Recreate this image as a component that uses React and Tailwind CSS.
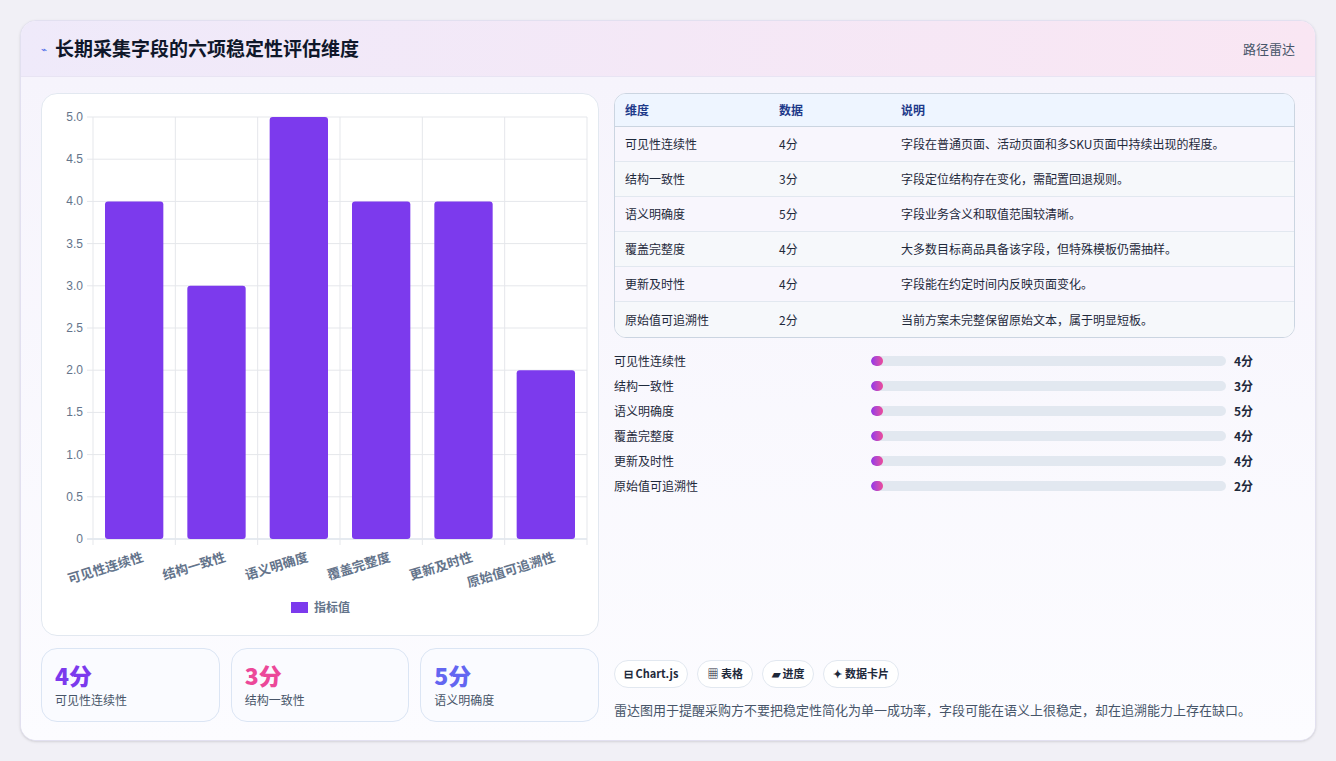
import React from "react";

const rows = [
  ["可见性连续性", 4, "字段在普通页面、活动页面和多SKU页面中持续出现的程度。"],
  ["结构一致性", 3, "字段定位结构存在变化，需配置回退规则。"],
  ["语义明确度", 5, "字段业务含义和取值范围较清晰。"],
  ["覆盖完整度", 4, "大多数目标商品具备该字段，但特殊模板仍需抽样。"],
  ["更新及时性", 4, "字段能在约定时间内反映页面变化。"],
  ["原始值可追溯性", 2, "当前方案未完整保留原始文本，属于明显短板。"],
];

function Chart() {
  const x0 = 51, x1 = 545, y0 = 23, y1 = 445;
  const cw = (x1 - x0) / 6;
  const yv = (v) => y1 - (v / 5) * (y1 - y0);
  const ticks = [0, 0.5, 1, 1.5, 2, 2.5, 3, 3.5, 4, 4.5, 5];
  return (
    <svg width="558" height="542" className="block" style={{ fontFamily: "'Liberation Sans','Noto Sans CJK SC',sans-serif" }}>
      {ticks.map((t) => (
        <g key={t}>
          <line x1={x0 - 6} x2={x1} y1={yv(t)} y2={yv(t)} stroke={t === 0 ? "#cbd5e1" : "#e5e7eb"} />
          <text x={x0 - 10} y={yv(t) + 4} textAnchor="end" fontSize="12" fill="#64748b">{t === 0 ? "0" : t.toFixed(1)}</text>
        </g>
      ))}
      {Array.from({ length: 7 }).map((_, i) => (
        <line key={i} x1={x0 + i * cw} x2={x0 + i * cw} y1={y0} y2={y1 + 6} stroke="#e5e7eb" />
      ))}
      {rows.map((r, i) => {
        const bx = x0 + i * cw + 12;
        return <rect key={i} x={bx} y={yv(r[1])} width={cw - 24} height={y1 - yv(r[1])} rx="3" fill="#7c3aed" />;
      })}
      {rows.map((r, i) => {
        const cx = x0 + i * cw + cw / 2 + 10;
        return (
          <text key={i} x={cx} y={y1 + 22} textAnchor="end" fontSize="13" fontWeight="bold" fill="#64748b" transform={`rotate(-17 ${cx} ${y1 + 22})`}>
            {r[0]}
          </text>
        );
      })}
      <rect x="249" y="508" width="17" height="11" fill="#7c3aed" />
      <text x="272" y="518" fontSize="12" fontWeight="bold" fill="#64748b">指标值</text>
    </svg>
  );
}

export default function App() {
  return (
    <div className="min-h-[761px] bg-[#f1f0f6] p-5" style={{ fontFamily: "'Noto Sans CJK SC','Liberation Sans',sans-serif" }}>
      <div className="rounded-2xl border border-[#e2e0f0] bg-white overflow-hidden shadow-sm">
        <div className="h-[56px] flex items-center justify-between px-5 bg-gradient-to-r from-[#efeafa] to-[#f9e6f3] border-b border-[#e8e4f3]">
          <div className="flex items-center gap-2">
            <span className="text-[10px] text-[#4f6ee8]">⌁</span>
            <span className="text-[19px] font-bold text-[#0f172a]">长期采集字段的六项稳定性评估维度</span>
          </div>
          <span className="text-[13px] text-[#475569]">路径雷达</span>
        </div>
        <div className="flex gap-[15px] px-5 pt-4 pb-[18px] bg-gradient-to-b from-[#f6f4fc] to-[#fcfcff]">
          <div className="w-[558px] flex flex-col gap-3">
            <div className="h-[543px] rounded-2xl border border-[#e2e8f0] bg-white overflow-hidden">
              <Chart />
            </div>
            <div className="flex gap-[11px]">
              {[["4分", "text-[#7c3aed]", "可见性连续性"], ["3分", "text-[#ec4899]", "结构一致性"], ["5分", "text-[#6366f1]", "语义明确度"]].map(([v, c, l]) => (
                <div key={l} className="w-[179px] h-[74px] rounded-2xl border border-[#dbe5f4] bg-[#fafbff] px-[13px] pt-[12px]">
                  <div className={`text-[23px] leading-[28px] font-extrabold ${c}`}>{v}</div>
                  <div className="text-[12px] text-[#475569] mt-[2px]">{l}</div>
                </div>
              ))}
            </div>
          </div>
          <div className="flex-1 flex flex-col">
            <div className="rounded-xl border border-[#cbd5e1] overflow-hidden bg-white">
              <div className="flex h-[33px] items-center bg-[#eef5ff] border-b border-[#cbd5e1] text-[12px] font-bold text-[#1e3a8a]">
                <div className="w-[164px] pl-[10px]">维度</div>
                <div className="w-[122px]">数据</div>
                <div>说明</div>
              </div>
              {rows.map((r, i) => (
                <div key={i} className={`flex h-[35px] items-center text-[12px] text-[#1e293b] ${i < 5 ? "border-b border-[#e2e8f0]" : ""} ${i % 2 ? "bg-[#f6f8fb]" : "bg-[#f8f6fd]"}`}>
                  <div className="w-[164px] pl-[10px]">{r[0]}</div>
                  <div className="w-[122px]">{r[1]}分</div>
                  <div>{r[2]}</div>
                </div>
              ))}
            </div>
            <div className="mt-[10px] flex flex-col">
              {rows.map((r, i) => (
                <div key={i} className="flex items-center h-[25px] text-[12px]">
                  <div className="w-[257px] text-[#1e293b]">{r[0]}</div>
                  <div className="w-[355px] h-[10px] rounded-full bg-[#e2e8f0] overflow-hidden">
                    <div className="w-[12px] h-full rounded-full bg-gradient-to-r from-[#9333ea] to-[#ec4899]" />
                  </div>
                  <div className="ml-2 font-bold text-[#1e293b]">{r[1]}分</div>
                </div>
              ))}
            </div>
            <div className="flex-1" />
            <div className="flex gap-[9px] text-[11px] font-bold text-[#1e293b]">
              {["⊟ Chart.js", "▦ 表格", "▰ 进度", "✦ 数据卡片"].map((p) => (
                <div key={p} className="h-[28px] px-[9px] flex items-center rounded-full border border-[#e2e8f0] bg-white">{p}</div>
              ))}
            </div>
            <div className="mt-[12px] text-[13px] text-[#475569] mb-[3px]">雷达图用于提醒采购方不要把稳定性简化为单一成功率，字段可能在语义上很稳定，却在追溯能力上存在缺口。</div>
          </div>
        </div>
      </div>
    </div>
  );
}
